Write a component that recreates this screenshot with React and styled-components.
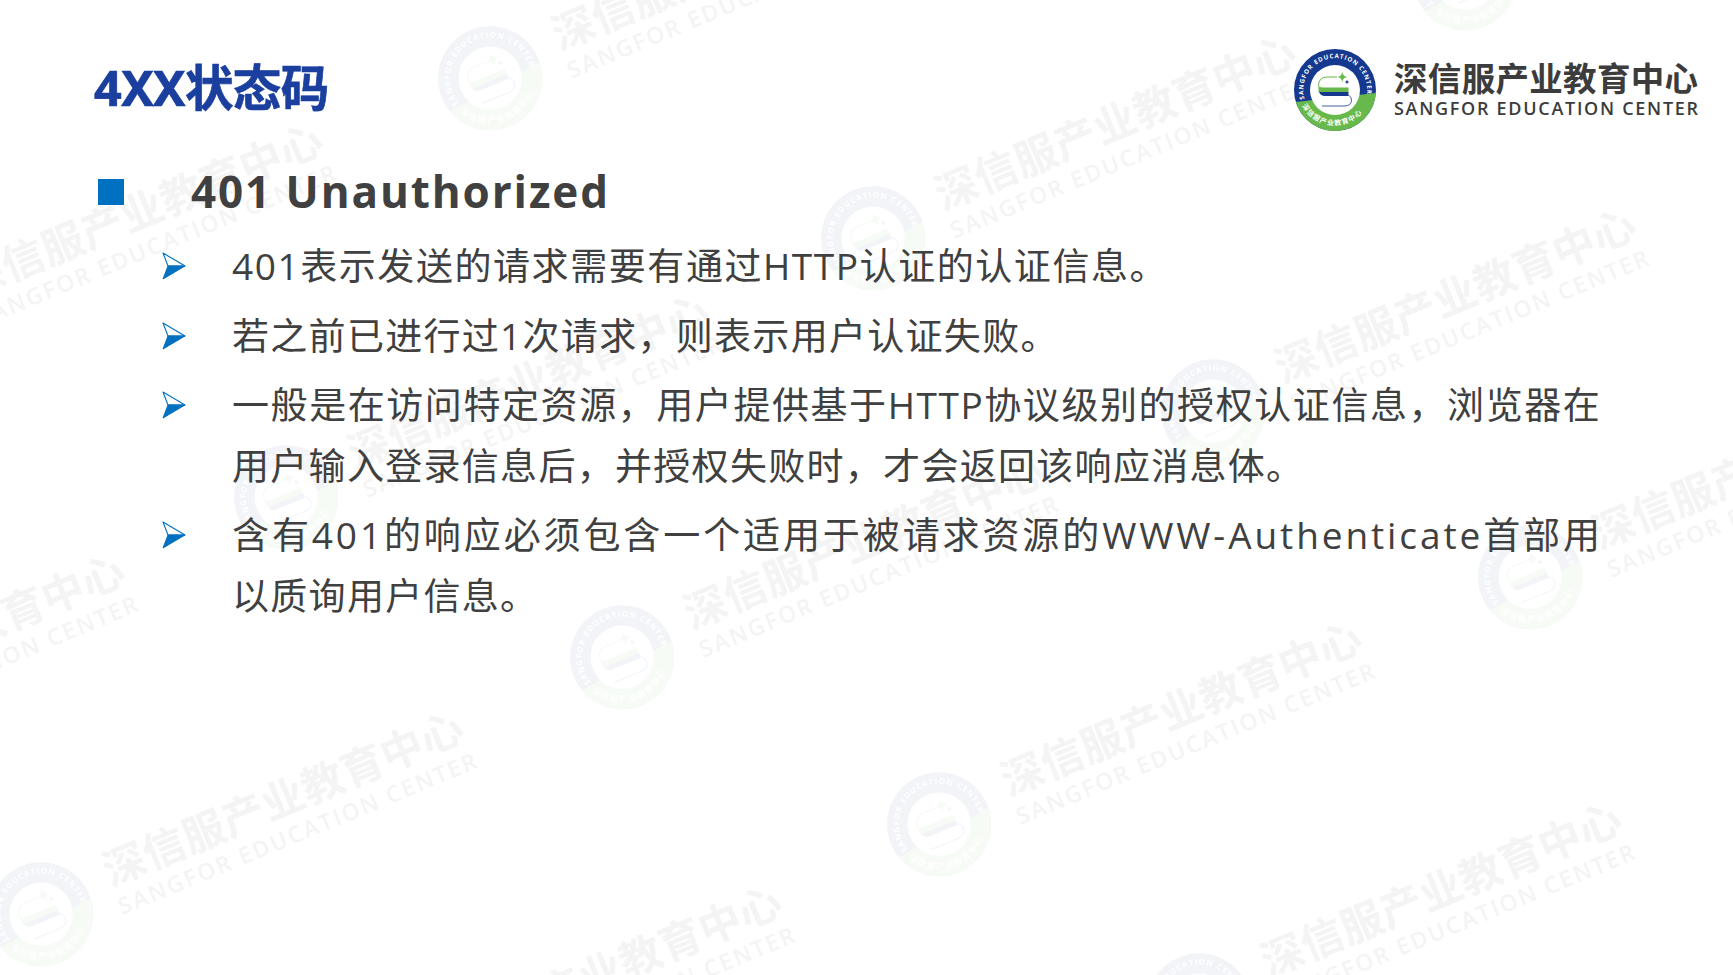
import React, { useId } from 'react'
import styled, { createGlobalStyle } from 'styled-components'

const GlobalStyle = createGlobalStyle`
    html, body {
        margin: 0;
        padding: 0;
        background: #fff;
    }
`

const fontStack = `"Open Sans", "Noto Sans CJK SC", sans-serif`

const Slide = styled.div`
    position: relative;
    width: 1733px;
    height: 975px;
    overflow: hidden;
    background: #fff;
    font-family: ${fontStack};
`

const WatermarkLayer = styled.div`
    position: absolute;
    inset: 0;
    opacity: 0.05;
`

const WatermarkItem = styled.div`
    position: absolute;
    width: 520px;
    height: 107px;
    transform-origin: 52px 53px;
    transform: rotate(-22.5deg);
`

const Content = styled.div`
    position: relative;
    display: flex;
    flex-direction: column;
    padding: 48px 29px 0 94px;
`

const Header = styled.header`
    display: flex;
    justify-content: space-between;
    align-items: flex-start;
    height: 84px;
`

const Title = styled.h1`
    margin: -3px 0 0;
    font-size: 48.5px;
    line-height: 84px;
    font-weight: 700;
    letter-spacing: -0.6px;
    color: #1b3f9e;
    -webkit-text-stroke: 0.7px #1b3f9e;
    font-family: "Noto Sans", "Noto Sans CJK SC", sans-serif;
`

const HeadingRow = styled.div`
    display: flex;
    align-items: center;
    margin-top: 28px;
    height: 61px;
`

const Square = styled.span`
    width: 26px;
    height: 26px;
    margin: 2px 0 0 4px;
    background: #0070c0;
`

const Heading = styled.h2`
    margin: 0 0 0 67px;
    font-size: 44px;
    font-weight: 700;
    letter-spacing: 1.9px;
    color: #404040;
`

const List = styled.ul`
    list-style: none;
    margin: 15px 0 0;
    padding: 0 0 0 68px;
    display: flex;
    flex-direction: column;
    gap: 9px;
`

const Item = styled.li`
    display: grid;
    grid-template-columns: 70px auto;
    font-size: 37px;
    line-height: 60.5px;
    color: #404040;
`

const Line = styled.span`
    display: block;
    white-space: nowrap;
    letter-spacing: ${props => props.$spacing || 1.3}px;
`

const ArrowBox = styled.span`
    display: flex;
    align-items: center;
    height: 60px;
`

const Arrow = () => (
    <svg width="24" height="28" viewBox="0 0 24 28">
        <path d="M1 1 L23 14 L6 14 Z" fill="#fff" stroke="#0070c0" strokeWidth="1.1" strokeLinejoin="round" />
        <path d="M6 14 L23 14 L1 27 Z" fill="#0070c0" stroke="#0070c0" strokeWidth="1" strokeLinejoin="round" />
    </svg>
)

const Logo = ({ width = 410 }) => {
    const id = useId().replace(/[^a-zA-Z0-9]/g, '')
    return (
        <svg width={width} height={(width * 84) / 410} viewBox="0 0 410 84">
            <defs>
                <path id={`${id}top`} d="M 10.5 51 A 32 32 0 1 1 72.5 49" />
                <path id={`${id}bot`} d="M 7 55 A 36.5 36.5 0 0 0 76 50" />
            </defs>
            <circle cx="41" cy="42" r="41" fill="#14398f" />
            <path d="M 1.8 54 A 41 41 0 0 0 81.9 45 Z" fill="#66b94a" />
            <circle cx="41" cy="42" r="25" fill="#fff" />
            <text fontFamily="Open Sans, sans-serif" fontSize="6.2" fontWeight="700" fill="#fff">
                <textPath href={`#${id}top`} textLength="113">SANGFOR EDUCATION CENTER</textPath>
            </text>
            <text fontFamily="Noto Sans CJK SC, sans-serif" fontSize="7" fontWeight="700" fill="#fff" letterSpacing="0.9">
                <textPath href={`#${id}bot`} startOffset="3">深信服产业教育中心</textPath>
            </text>
            <path d="M 43 29 H 33 Q 24.5 29 24.5 38" fill="none" stroke="#66b94a" strokeWidth="1" />
            <path d="M 24.5 37 Q 25 39.5 29 39.5 H 54.5 V 44 H 24.5 Z" fill="#66b94a" />
            <path d="M 25 44 H 54.5 V 48 H 31 Q 26.5 48 25 44 Z" fill="#14398f" />
            <path d="M 54.5 47 Q 57.5 49 57.5 52 Q 57.5 58 50 58 H 28" fill="none" stroke="#14398f" strokeWidth="0.8" />
            <path d="M 48.3 24 Q 49 28.3 53.3 29 Q 49 29.7 48.3 34 Q 47.6 29.7 43.3 29 Q 47.6 28.3 48.3 24 Z" fill="#66b94a" />
            <path d="M 53 31.8 Q 53.3 33.7 55.2 34 Q 53.3 34.3 53 36.2 Q 52.7 34.3 50.8 34 Q 52.7 33.7 53 31.8 Z" fill="#14398f" />
            <text x="100" y="43" fontFamily="Noto Sans CJK SC, sans-serif" fontSize="33.5" fontWeight="700" fill="#3c3c3c" textLength="304">
                深信服产业教育中心
            </text>
            <text x="100" y="67" fontFamily="Open Sans, sans-serif" fontSize="18" fontWeight="600" fill="#3c3c3c" textLength="304">
                SANGFOR EDUCATION CENTER
            </text>
        </svg>
    )
}

// logo centres of the background stamp
const stamps = [
    [490, 78], [873, 238], [1213, 411], [1530, 577], [622, 657], [939, 824], [41, 914],
    [286, 497], [1465, -22], [1199, 1005], [359, 1088], [-100, 326], [-298, 757], [1847, 440],
]

const items = [
    { lines: ['401表示发送的请求需要有通过HTTP认证的认证信息。'], spacing: [1.57] },
    { lines: ['若之前已进行过1次请求，则表示用户认证失败。'] },
    { lines: ['一般是在访问特定资源，用户提供基于HTTP协议级别的授权认证信息，浏览器在', '用户输入登录信息后，并授权失败时，才会返回该响应消息体。'], spacing: [1.57] },
    { lines: ['含有401的响应必须包含一个适用于被请求资源的WWW-Authenticate首部用', '以质询用户信息。'], spacing: [2.9] },
]

export default function App() {
    return (
        <Slide>
            <GlobalStyle />
            <WatermarkLayer>
                {stamps.map(([x, y]) => (
                    <WatermarkItem key={`${x}-${y}`} style={{ left: x - 52, top: y - 53 }}>
                        <Logo width={520} />
                    </WatermarkItem>
                ))}
            </WatermarkLayer>
            <Content>
                <Header>
                    <Title>4XX状态码</Title>
                    <Logo />
                </Header>
                <HeadingRow>
                    <Square />
                    <Heading>401 Unauthorized</Heading>
                </HeadingRow>
                <List>
                    {items.map(item => (
                        <Item key={item.lines[0]}>
                            <ArrowBox>
                                <Arrow />
                            </ArrowBox>
                            <div>
                                {item.lines.map((line, i) => (
                                    <Line key={line} $spacing={item.spacing && item.spacing[i]}>
                                        {line}
                                    </Line>
                                ))}
                            </div>
                        </Item>
                    ))}
                </List>
            </Content>
        </Slide>
    )
}
